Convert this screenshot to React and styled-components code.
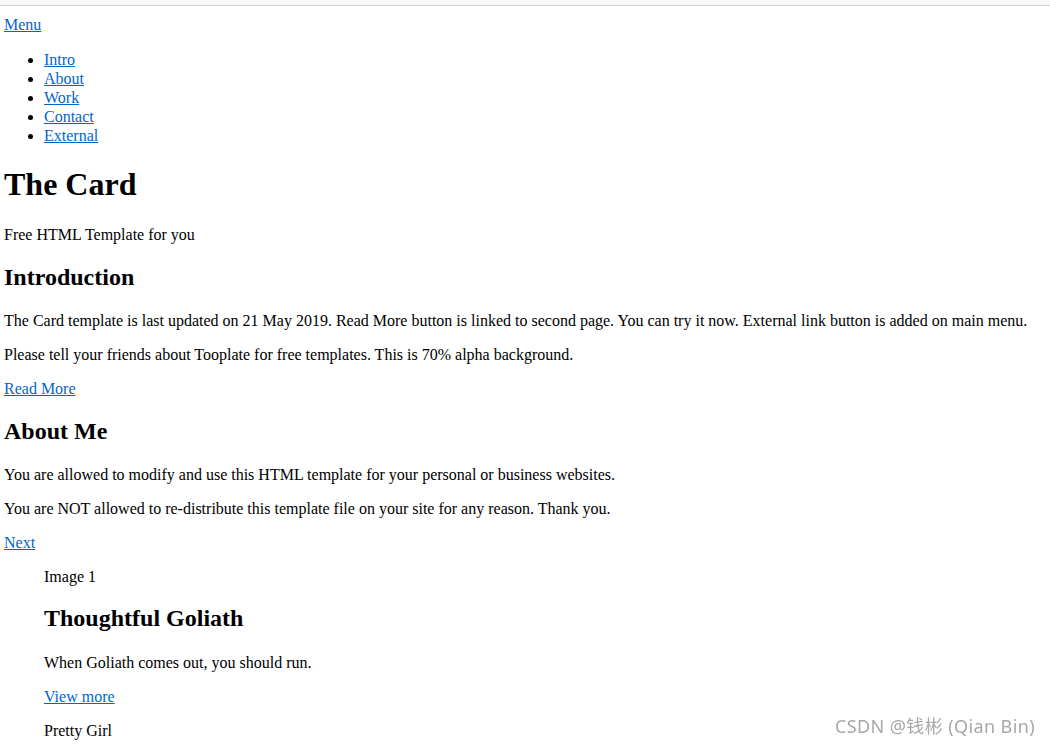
import React from 'react'
import styled, { createGlobalStyle } from 'styled-components'

const GlobalStyle = createGlobalStyle`
  html, body {
    margin: 0;
    padding: 0;
    background: #fff;
  }
  body {
    font-family: 'Liberation Serif', 'Times New Roman', serif;
    font-size: 16px;
    color: #000;
  }
`

const TopBar = styled.div`
  height: 5px;
  background-color: #f8f8f9;
  border-bottom: 1px solid #d2d2d2;
`

const Page = styled.div`
  padding: 9px 8px 0 4px;
`

const Link = styled.a`
  color: #0066cc;
  text-decoration: underline;
  cursor: pointer;
`

const Nav = styled.nav`
  line-height: 19px;
`

const NavList = styled.ul`
  margin: 16px 0;
  padding-left: 40px;
  list-style: disc;
`

const NavItem = styled.li`
  line-height: 19px;
`

const Title = styled.h1`
  font-size: 32px;
  font-weight: bold;
  line-height: 37px;
  margin: 21.4px 0 22.4px;
`

const Heading = styled.h2`
  font-size: 24px;
  font-weight: bold;
  line-height: 27.6px;
  margin: ${props => (props.$tight ? '19px 0 21.3px' : '19.9px 0 20.8px')};
`

const Text = styled.p`
  line-height: 18px;
  margin: 16px 0;
`

const Gallery = styled.div`
  margin: 16px 40px;
`

const Watermark = styled.div`
  position: fixed;
  right: 15px;
  bottom: 8px;
  font-family: 'Noto Sans', 'Noto Sans CJK SC', sans-serif;
  font-size: 18px;
  letter-spacing: 0.4px;
  color: #a8a8a8;
  text-shadow: 0 0 2px #fff;
  pointer-events: none;
`

const menu = ['Intro', 'About', 'Work', 'Contact', 'External']

const works = [
  {
    image: 'Image 1',
    title: 'Thoughtful Goliath',
    text: 'When Goliath comes out, you should run.',
  },
]

function App() {
  return (
    <>
      <GlobalStyle />
      <TopBar />
      <Page>
        <Nav>
          <Link href="#menu">Menu</Link>
          <NavList>
            {menu.map(item => (
              <NavItem key={item}>
                <Link href={`#${item.toLowerCase()}`}>{item}</Link>
              </NavItem>
            ))}
          </NavList>
        </Nav>

        <Title>The Card</Title>
        <Text>Free HTML Template for you</Text>

        <section id="intro">
          <Heading>Introduction</Heading>
          <Text>The Card template is last updated on 21 May 2019. Read More button is linked to second page. You can try it now. External link button is added on main menu.</Text>
          <Text>Please tell your friends about Tooplate for free templates. This is 70% alpha background.</Text>
          <Text><Link href="#more">Read More</Link></Text>
        </section>

        <section id="about">
          <Heading>About Me</Heading>
          <Text>You are allowed to modify and use this HTML template for your personal or business websites.</Text>
          <Text>You are NOT allowed to re-distribute this template file on your site for any reason. Thank you.</Text>
          <Text><Link href="#work">Next</Link></Text>
        </section>

        <Gallery id="work">
          {works.map(work => (
            <div key={work.title}>
              <Text>{work.image}</Text>
              <Heading $tight>{work.title}</Heading>
              <Text>{work.text}</Text>
              <Text><Link href="#view">View more</Link></Text>
            </div>
          ))}
          <Text>Pretty Girl</Text>
        </Gallery>
      </Page>
      <Watermark>CSDN @钱彬 (Qian Bin)</Watermark>
    </>
  )
}

export default App
